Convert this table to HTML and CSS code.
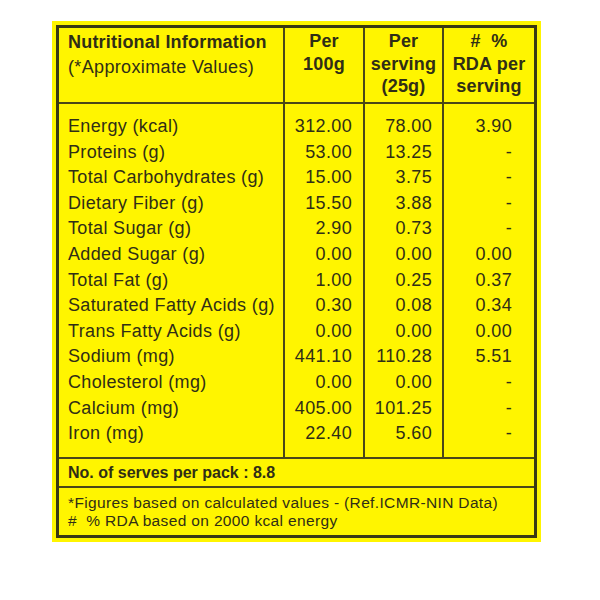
FILE: index.html
```html
<!DOCTYPE html>
<html lang="en">
<head>
<meta charset="utf-8">
<title>Nutritional Information</title>
<link rel="stylesheet" href="styles.css">
</head>
<body>
<div class="panel">
  <div class="box">
    <div class="row head">
      <div class="c name"><b>Nutritional Information</b><span class="sub">(*Approximate Values)</span></div>
      <div class="c ctr">Per<br>100g</div>
      <div class="c ctr">Per<br>serving<br>(25g)</div>
      <div class="c ctr">#&nbsp;&nbsp;%<br>RDA per<br>serving</div>
    </div>
    <div class="body">
      <div class="row"><div class="c name">Energy (kcal)</div><div class="c n2">312.00</div><div class="c n3">78.00</div><div class="c n4">3.90</div></div>
      <div class="row"><div class="c name">Proteins (g)</div><div class="c n2">53.00</div><div class="c n3">13.25</div><div class="c n4">-</div></div>
      <div class="row"><div class="c name">Total Carbohydrates (g)</div><div class="c n2">15.00</div><div class="c n3">3.75</div><div class="c n4">-</div></div>
      <div class="row"><div class="c name">Dietary Fiber (g)</div><div class="c n2">15.50</div><div class="c n3">3.88</div><div class="c n4">-</div></div>
      <div class="row"><div class="c name">Total Sugar (g)</div><div class="c n2">2.90</div><div class="c n3">0.73</div><div class="c n4">-</div></div>
      <div class="row"><div class="c name">Added Sugar (g)</div><div class="c n2">0.00</div><div class="c n3">0.00</div><div class="c n4">0.00</div></div>
      <div class="row"><div class="c name">Total Fat (g)</div><div class="c n2">1.00</div><div class="c n3">0.25</div><div class="c n4">0.37</div></div>
      <div class="row"><div class="c name">Saturated Fatty Acids (g)</div><div class="c n2">0.30</div><div class="c n3">0.08</div><div class="c n4">0.34</div></div>
      <div class="row"><div class="c name">Trans Fatty Acids (g)</div><div class="c n2">0.00</div><div class="c n3">0.00</div><div class="c n4">0.00</div></div>
      <div class="row"><div class="c name">Sodium (mg)</div><div class="c n2">441.10</div><div class="c n3">110.28</div><div class="c n4">5.51</div></div>
      <div class="row"><div class="c name">Cholesterol (mg)</div><div class="c n2">0.00</div><div class="c n3">0.00</div><div class="c n4">-</div></div>
      <div class="row"><div class="c name">Calcium (mg)</div><div class="c n2">405.00</div><div class="c n3">101.25</div><div class="c n4">-</div></div>
      <div class="row"><div class="c name">Iron (mg)</div><div class="c n2">22.40</div><div class="c n3">5.60</div><div class="c n4">-</div></div>
    </div>
    <div class="serves">No. of serves per pack : 8.8</div>
    <div class="notes">
      <div>*Figures based on calculated values - (Ref.ICMR-NIN Data)</div>
      <div>#&nbsp;&nbsp;% RDA based on 2000 kcal energy</div>
    </div>
  </div>
</div>
</body>
</html>
```
FILE: styles.css
```css
html, body {
  margin: 0;
  padding: 0;
  background: #ffffff;
}

body {
  font-family: "Liberation Sans", Arial, sans-serif;
  color: #302e16;
}

.panel {
  margin: 21px 0 0 52px;
  width: 481px;
  padding: 4px;
  background: #fff500;
}

.box {
  border: 3px solid #3a3814;
}

.row {
  display: grid;
  grid-template-columns: 224px 80px 79px 1fr;
}

.c + .c {
  border-left: 2px solid #4a4718;
}

.head {
  border-bottom: 2px solid #4a4718;
}

.head .c {
  height: 72px;
  padding-top: 2px;
  font-size: 18px;
  font-weight: bold;
  line-height: 22.5px;
  letter-spacing: 0.2px;
}

.head .name {
  padding-left: 9px;
}

.head .name b {
  display: block;
  line-height: 25px;
}

.head .name .sub {
  display: block;
  font-weight: normal;
  line-height: 25px;
  letter-spacing: 0.35px;
}

.ctr {
  text-align: center;
}

.body {
  border-bottom: 2px solid #4a4718;
}

.body .c {
  font-size: 18px;
  line-height: 25.6px;
  letter-spacing: 0.35px;
  white-space: nowrap;
}

.body .row:first-child .c {
  padding-top: 10px;
}

.body .row:last-child .c {
  padding-bottom: 10px;
}

.body .name {
  padding-left: 9px;
}

.n2, .n3, .n4 {
  text-align: right;
}

.n2 {
  padding-right: 11px;
}

.n3 {
  padding-right: 10px;
}

.n4 {
  padding-right: 22px;
}

.serves {
  border-bottom: 2px solid #4a4718;
  padding-left: 9px;
  font-size: 16px;
  font-weight: bold;
  line-height: 27px;
}

.notes {
  padding: 6px 9px 5px;
  font-size: 15.5px;
  line-height: 18px;
  letter-spacing: 0.35px;
}
```
